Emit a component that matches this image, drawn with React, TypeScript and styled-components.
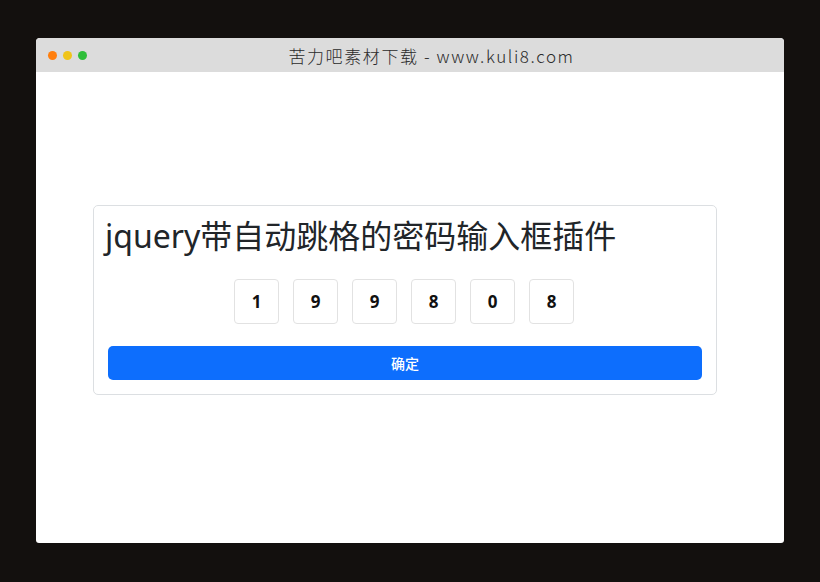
import styled, { createGlobalStyle } from "styled-components";

const GlobalStyle = createGlobalStyle`
  html, body {
    margin: 0;
    padding: 0;
    background: #13100e;
  }
  body {
    font-family: "Noto Sans", "Noto Sans CJK SC", sans-serif;
  }
`;

const digits = ["1", "9", "9", "8", "0", "8"];
const dots = ["#ff7f0e", "#f0c419", "#2fbe3a"];

const App = () => {
  return (
    <Page>
      <GlobalStyle />
      <Window>
        <TitleBar>
          <Dots>
            {dots.map((c) => (
              <Dot key={c} color={c} />
            ))}
          </Dots>
          <Title>苦力吧素材下载 - www.kuli8.com</Title>
        </TitleBar>
        <Content>
          <Card>
            <Heading>jquery带自动跳格的密码输入框插件</Heading>
            <CodeRow>
              {digits.map((d, i) => (
                <CodeBox key={i} type="text" maxLength={1} defaultValue={d} />
              ))}
            </CodeRow>
            <SubmitButton type="button">确定</SubmitButton>
          </Card>
        </Content>
      </Window>
    </Page>
  );
};

const Page = styled.div`
  width: 820px;
  height: 582px;
  box-sizing: border-box;
  padding: 38px 36px 39px;
  display: flex;
`;

const Window = styled.div`
  flex: 1;
  display: flex;
  flex-direction: column;
  background: #fff;
  border-radius: 4px 4px 3px 3px;
  overflow: hidden;
`;

const TitleBar = styled.div`
  height: 34px;
  background: #dcdcdc;
  display: flex;
  align-items: center;
  padding: 0 12px;
`;

const Dots = styled.div`
  display: flex;
  gap: 6px;
`;

const Dot = styled.span<{ color: string }>`
  width: 9px;
  height: 9px;
  border-radius: 50%;
  background: ${(p) => p.color};
`;

const Title = styled.div`
  flex: 1;
  text-align: center;
  padding-left: 4px;
  font-family: "Noto Sans CJK SC", sans-serif;
  font-weight: 300;
  font-size: 17px;
  color: #2a2a2a;
  letter-spacing: 1.6px;
`;

const Content = styled.div`
  flex: 1;
  padding: 133px 0 0 57px;
`;

const Card = styled.div`
  width: 624px;
  box-sizing: border-box;
  border: 1px solid #dcdfe2;
  border-radius: 5px;
  padding: 11px 14px 14px 14px;
  display: flex;
  flex-direction: column;
`;

const Heading = styled.h1`
  margin: 0 0 0 -3px;
  font-family: "Noto Sans", "Noto Sans CJK SC", sans-serif;
  font-weight: 400;
  font-size: 32px;
  line-height: 1.2;
  color: #212529;
`;

const CodeRow = styled.div`
  display: flex;
  justify-content: center;
  gap: 14px;
  margin: 24px 0 22px;
  padding-right: 2px;
`;

const CodeBox = styled.input`
  width: 45px;
  height: 45px;
  box-sizing: border-box;
  border: 1px solid #e2e2e2;
  border-radius: 4px;
  text-align: center;
  font-family: "Noto Sans", sans-serif;
  font-size: 17px;
  font-weight: 700;
  color: #111;
  padding: 0;
  outline: none;
`;

const SubmitButton = styled.button`
  height: 34px;
  border: none;
  border-radius: 5px;
  background: #0d6efd;
  color: #fff;
  font-family: "Noto Sans CJK SC", sans-serif;
  font-weight: 500;
  font-size: 14px;
  cursor: pointer;
`;

export default App;
